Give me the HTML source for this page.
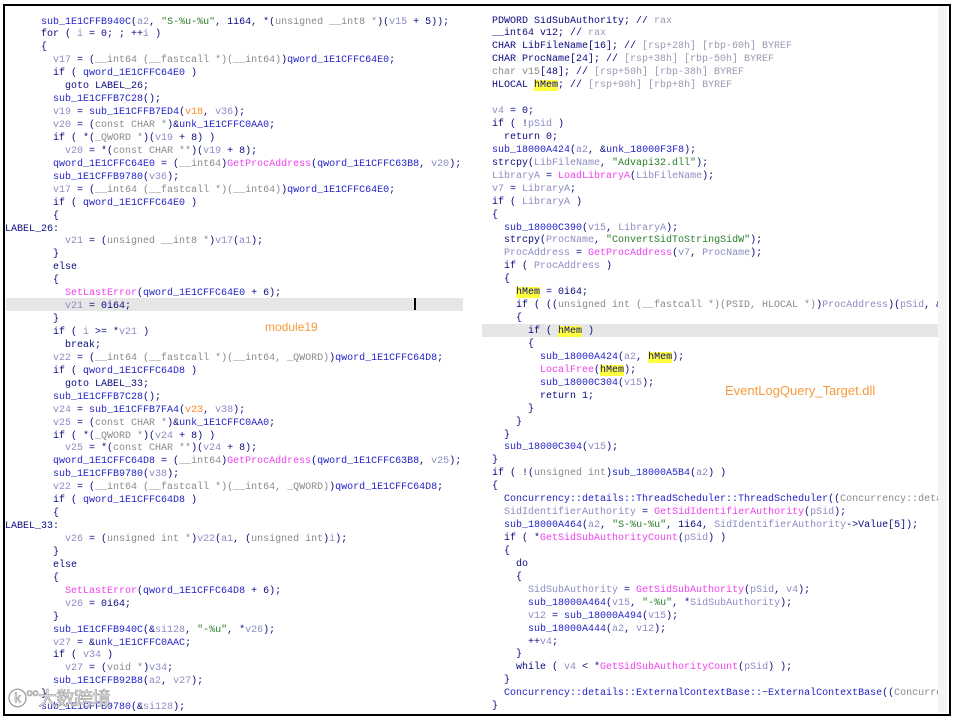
<!DOCTYPE html>
<html><head><meta charset="utf-8"><style>
html,body{margin:0;padding:0;background:#fff;width:956px;height:716px;overflow:hidden}
.frame{position:absolute;left:3px;top:4px;width:944px;height:708px;border:2px solid #000;box-sizing:content-box}
.sb{position:absolute;left:938px;top:6px;width:9px;height:707px;background:#f4f4f4}
.code{position:absolute;font-family:"Liberation Mono",monospace;font-size:10px;line-height:12.95px;color:#0a0a80;overflow:hidden}
.code div{height:12.95px;white-space:pre}
.v{color:#8c8cc4}.t{color:#8a8a8a}.s{color:#2a7d2a}.f{color:#f040f0}.o{color:#ff8a20}.b{color:#2323c8}.c{color:#9a9ab4}
.h{background:#ffff40}
.hl{position:absolute;background:#e6e6e6;height:13px}
.lbl{position:absolute;font-family:"Liberation Sans",sans-serif;color:#f59b3c}
</style></head><body>
<div class="frame"></div>
<div class="hl" style="left:6px;top:298px;width:457px"></div>
<div class="hl" style="left:482px;top:324px;width:456px"></div>
<div style="position:absolute;left:414px;top:298px;width:2px;height:12px;background:#000"></div>
<div class="sb"></div>
<div class="code" style="left:5px;top:16.5px;width:473px;height:696px"><div>      <span class="b">sub_1E1CFFB940C</span>(<span class="v">a2</span>, <span class="s">"S-%u-%u"</span>, 1i64, *(<span class="t">unsigned __int8 *</span>)(<span class="v">v15</span> + 5));</div><div>      for ( <span class="v">i</span> = 0; ; ++<span class="v">i</span> )</div><div>      {</div><div>        <span class="v">v17</span> = (<span class="t">__int64 (__fastcall *)(__int64)</span>)<span class="b">qword_1E1CFFC64E0</span>;</div><div>        if ( <span class="b">qword_1E1CFFC64E0</span> )</div><div>          goto LABEL_26;</div><div>        <span class="b">sub_1E1CFFB7C28</span>();</div><div>        <span class="v">v19</span> = <span class="b">sub_1E1CFFB7ED4</span>(<span class="o">v18</span>, <span class="v">v36</span>);</div><div>        <span class="v">v20</span> = (<span class="t">const CHAR *</span>)&amp;<span class="b">unk_1E1CFFC0AA0</span>;</div><div>        if ( *(<span class="t">_QWORD *</span>)(<span class="v">v19</span> + 8) )</div><div>          <span class="v">v20</span> = *(<span class="t">const CHAR **</span>)(<span class="v">v19</span> + 8);</div><div>        <span class="b">qword_1E1CFFC64E0</span> = (<span class="t">__int64</span>)<span class="f">GetProcAddress</span>(<span class="b">qword_1E1CFFC63B8</span>, <span class="v">v20</span>);</div><div>        <span class="b">sub_1E1CFFB9780</span>(<span class="v">v36</span>);</div><div>        <span class="v">v17</span> = (<span class="t">__int64 (__fastcall *)(__int64)</span>)<span class="b">qword_1E1CFFC64E0</span>;</div><div>        if ( <span class="b">qword_1E1CFFC64E0</span> )</div><div>        {</div><div>LABEL_26:</div><div>          <span class="v">v21</span> = (<span class="t">unsigned __int8 *</span>)<span class="v">v17</span>(<span class="v">a1</span>);</div><div>        }</div><div>        else</div><div>        {</div><div>          <span class="f">SetLastError</span>(<span class="b">qword_1E1CFFC64E0</span> + 6);</div><div>          <span class="v">v21</span> = 0i64;</div><div>        }</div><div>        if ( <span class="v">i</span> &gt;= *<span class="v">v21</span> )</div><div>          break;</div><div>        <span class="v">v22</span> = (<span class="t">__int64 (__fastcall *)(__int64, _QWORD)</span>)<span class="b">qword_1E1CFFC64D8</span>;</div><div>        if ( <span class="b">qword_1E1CFFC64D8</span> )</div><div>          goto LABEL_33;</div><div>        <span class="b">sub_1E1CFFB7C28</span>();</div><div>        <span class="v">v24</span> = <span class="b">sub_1E1CFFB7FA4</span>(<span class="o">v23</span>, <span class="v">v38</span>);</div><div>        <span class="v">v25</span> = (<span class="t">const CHAR *</span>)&amp;<span class="b">unk_1E1CFFC0AA0</span>;</div><div>        if ( *(<span class="t">_QWORD *</span>)(<span class="v">v24</span> + 8) )</div><div>          <span class="v">v25</span> = *(<span class="t">const CHAR **</span>)(<span class="v">v24</span> + 8);</div><div>        <span class="b">qword_1E1CFFC64D8</span> = (<span class="t">__int64</span>)<span class="f">GetProcAddress</span>(<span class="b">qword_1E1CFFC63B8</span>, <span class="v">v25</span>);</div><div>        <span class="b">sub_1E1CFFB9780</span>(<span class="v">v38</span>);</div><div>        <span class="v">v22</span> = (<span class="t">__int64 (__fastcall *)(__int64, _QWORD)</span>)<span class="b">qword_1E1CFFC64D8</span>;</div><div>        if ( <span class="b">qword_1E1CFFC64D8</span> )</div><div>        {</div><div>LABEL_33:</div><div>          <span class="v">v26</span> = (<span class="t">unsigned int *</span>)<span class="v">v22</span>(<span class="v">a1</span>, (<span class="t">unsigned int</span>)<span class="v">i</span>);</div><div>        }</div><div>        else</div><div>        {</div><div>          <span class="f">SetLastError</span>(<span class="b">qword_1E1CFFC64D8</span> + 6);</div><div>          <span class="v">v26</span> = 0i64;</div><div>        }</div><div>        <span class="b">sub_1E1CFFB940C</span>(&amp;<span class="v">si128</span>, <span class="s">"-%u"</span>, *<span class="v">v26</span>);</div><div>        <span class="v">v27</span> = &amp;<span class="b">unk_1E1CFFC0AAC</span>;</div><div>        if ( <span class="v">v34</span> )</div><div>          <span class="v">v27</span> = (<span class="t">void *</span>)<span class="v">v34</span>;</div><div>        <span class="b">sub_1E1CFFB92B8</span>(<span class="v">a2</span>, <span class="v">v27</span>);</div><div>      }</div><div>      <span class="b">sub_1E1CFFB9780</span>(&amp;<span class="v">si128</span>);</div></div>
<div class="code" style="left:492px;top:15.5px;width:446px;height:697px"><div>PDWORD SidSubAuthority; // <span class="c">rax</span></div><div>__int64 v12; // <span class="c">rax</span></div><div>CHAR LibFileName[16]; // <span class="c">[rsp+28h] [rbp-60h] BYREF</span></div><div>CHAR ProcName[24]; // <span class="c">[rsp+38h] [rbp-50h] BYREF</span></div><div><span class="t">char v15</span>[48]; // <span class="c">[rsp+50h] [rbp-38h] BYREF</span></div><div>HLOCAL <span class="h">hMem</span>; // <span class="c">[rsp+90h] [rbp+8h] BYREF</span></div><div></div><div><span class="v">v4</span> = 0;</div><div>if ( !<span class="v">pSid</span> )</div><div>  return 0;</div><div><span class="b">sub_18000A424</span>(<span class="v">a2</span>, &amp;<span class="b">unk_18000F3F8</span>);</div><div>strcpy(<span class="v">LibFileName</span>, <span class="s">"Advapi32.dll"</span>);</div><div><span class="v">LibraryA</span> = <span class="f">LoadLibraryA</span>(<span class="v">LibFileName</span>);</div><div><span class="v">v7</span> = <span class="v">LibraryA</span>;</div><div>if ( <span class="v">LibraryA</span> )</div><div>{</div><div>  <span class="b">sub_18000C390</span>(<span class="v">v15</span>, <span class="v">LibraryA</span>);</div><div>  strcpy(<span class="v">ProcName</span>, <span class="s">"ConvertSidToStringSidW"</span>);</div><div>  <span class="v">ProcAddress</span> = <span class="f">GetProcAddress</span>(<span class="v">v7</span>, <span class="v">ProcName</span>);</div><div>  if ( <span class="v">ProcAddress</span> )</div><div>  {</div><div>    <span class="h">hMem</span> = 0i64;</div><div>    if ( ((<span class="t">unsigned int (__fastcall *)(PSID, HLOCAL *)</span>)<span class="v">ProcAddress</span>)(<span class="v">pSid</span>, &amp;</div><div>    {</div><div>      if ( <span class="h">hMem</span> )</div><div>      {</div><div>        <span class="b">sub_18000A424</span>(<span class="v">a2</span>, <span class="h">hMem</span>);</div><div>        <span class="f">LocalFree</span>(<span class="h">hMem</span>);</div><div>        <span class="b">sub_18000C304</span>(<span class="v">v15</span>);</div><div>        return 1;</div><div>      }</div><div>    }</div><div>  }</div><div>  <span class="b">sub_18000C304</span>(<span class="v">v15</span>);</div><div>}</div><div>if ( !(<span class="t">unsigned int</span>)<span class="b">sub_18000A5B4</span>(<span class="v">a2</span>) )</div><div>{</div><div>  <span class="b">Concurrency::details::ThreadScheduler::ThreadScheduler</span>((<span class="t">Concurrency::details</span></div><div>  <span class="v">SidIdentifierAuthority</span> = <span class="f">GetSidIdentifierAuthority</span>(<span class="v">pSid</span>);</div><div>  <span class="b">sub_18000A464</span>(<span class="v">a2</span>, <span class="s">"S-%u-%u"</span>, 1i64, <span class="v">SidIdentifierAuthority</span>-&gt;Value[5]);</div><div>  if ( *<span class="f">GetSidSubAuthorityCount</span>(<span class="v">pSid</span>) )</div><div>  {</div><div>    do</div><div>    {</div><div>      <span class="v">SidSubAuthority</span> = <span class="f">GetSidSubAuthority</span>(<span class="v">pSid</span>, <span class="v">v4</span>);</div><div>      <span class="b">sub_18000A464</span>(<span class="v">v15</span>, <span class="s">"-%u"</span>, *<span class="v">SidSubAuthority</span>);</div><div>      <span class="v">v12</span> = <span class="b">sub_18000A494</span>(<span class="v">v15</span>);</div><div>      <span class="b">sub_18000A444</span>(<span class="v">a2</span>, <span class="v">v12</span>);</div><div>      ++<span class="v">v4</span>;</div><div>    }</div><div>    while ( <span class="v">v4</span> &lt; *<span class="f">GetSidSubAuthorityCount</span>(<span class="v">pSid</span>) );</div><div>  }</div><div>  <span class="b">Concurrency::details::ExternalContextBase::~ExternalContextBase</span>((<span class="t">Concurre</span></div><div>}</div></div>
<div class="lbl" style="left:265px;top:320px;font-size:12px">module19</div>
<div class="lbl" style="left:725px;top:383px;font-size:13px">EventLogQuery_Target.dll</div>
<div style="position:absolute;left:8px;top:684px;font-family:'Noto Sans CJK SC',sans-serif;font-size:19px;color:#e8e8e8;-webkit-text-stroke:0.6px #999;letter-spacing:-1px">ⓚ°°大数跨境</div>
</body></html>
